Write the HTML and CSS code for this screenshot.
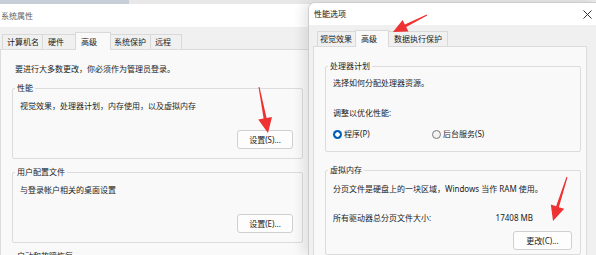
FILE: index.html
```html
<!DOCTYPE html>
<html lang="zh-CN">
<head>
<meta charset="utf-8">
<link rel="stylesheet" href="styles.css">
</head>
<body>
<div class="desk-strip"></div>

<div class="win win-sys">
  <div class="titlebar inactive">系统属性</div>
  <div class="tabstrip">
    <div class="tab t-name">计算机名</div>
    <div class="tab t-hw">硬件</div>
    <div class="tab sel t-adv">高级</div>
    <div class="tab t-prot">系统保护</div>
    <div class="tab t-rem">远程</div>
  </div>
  <div class="panel panel-sys">
    <div class="intro">要进行大多数更改，你必须作为管理员登录。</div>
    <fieldset class="group">
      <legend>性能</legend>
      <div class="desc">视觉效果，处理器计划，内存使用，以及虚拟内存</div>
      <div class="btnrow"><button class="btn">设置(S)...</button></div>
    </fieldset>
    <fieldset class="group g-next">
      <legend>用户配置文件</legend>
      <div class="desc">与登录帐户相关的桌面设置</div>
      <div class="btnrow"><button class="btn">设置(E)...</button></div>
    </fieldset>
    <fieldset class="group g-next g-last">
      <legend>启动和故障恢复</legend>
    </fieldset>
  </div>
</div>

<div class="win win-perf">
  <div class="titlebar perf-title">
    <span>性能选项</span>
    <svg class="close" width="9" height="9" viewBox="0 0 9 9"><path d="M0.5 0.5 L8.5 8.5 M8.5 0.5 L0.5 8.5" stroke="#333" stroke-width="1" fill="none"/></svg>
  </div>
  <div class="tabstrip perf-tabs">
    <div class="tab p-vis">视觉效果</div>
    <div class="tab sel p-adv">高级</div>
    <div class="tab p-dep">数据执行保护</div>
  </div>
  <div class="panel panel-perf">
    <fieldset class="group pgroup">
      <legend>处理器计划</legend>
      <div class="pdesc">选择如何分配处理器资源。</div>
      <div class="plabel">调整以优化性能:</div>
      <div class="radios">
        <label class="radio r-first"><span class="dot on"></span>程序(P)</label>
        <label class="radio"><span class="dot"></span>后台服务(S)</label>
      </div>
    </fieldset>
    <fieldset class="group pgroup vm">
      <legend>虚拟内存</legend>
      <div class="vdesc">分页文件是硬盘上的一块区域，Windows 当作 RAM 使用。</div>
      <div class="vrow"><span class="vlabel">所有驱动器总分页文件大小:</span><span class="vval">17408 MB</span></div>
      <div class="btnrow vbtn"><button class="btn btn-c">更改(C)...</button></div>
    </fieldset>
  </div>
</div>

<svg class="arrows" width="596" height="255" viewBox="0 0 596 255">
  <polygon fill="#ee3232" points="259.5,86.9 266.6,118.0 272.0,116.9 268,133 258.2,119.6 263.6,118.6 258.5,87.1"/>
  <polygon fill="#ee3232" points="427.2,15.4 406.2,27.0 408.4,31.5 393,32 402.6,19.9 404.8,24.4 426.8,14.6"/>
  <polygon fill="#ee3232" points="567.5,177.2 558.9,207.2 564.2,208.8 553,221 550.8,204.6 556.1,206.2 566.5,176.8"/>
</svg>
</body>
</html>
```

FILE: styles.css
```css
* { box-sizing: border-box; }
html, body { margin: 0; padding: 0; }
body {
  width: 596px;
  height: 255px;
  overflow: hidden;
  position: relative;
  background: #e8e8e8;
  font-family: "Noto Sans", "Noto Sans CJK SC", sans-serif;
  font-size: 8px;
  line-height: 12px;
  color: #1b1b1b;
}
.desk-strip {
  position: absolute;
  left: 0; top: 0;
  width: 129px; height: 4px;
  background: #c6ced8;
}
.win {
  position: absolute;
  background: #f0f0f0;
  display: flex;
  flex-direction: column;
}
.win-sys {
  left: 0; top: 4px;
  width: 312px; height: 251px;
  overflow: hidden;
}
.titlebar {
  background: #fff;
  display: flex;
  align-items: center;
  flex: none;
}
.win-sys .titlebar {
  height: 23px;
  padding-left: 1px;
  color: #5f5f5f;
}
.tabstrip {
  display: flex;
  align-items: flex-end;
  flex: none;
}
.win-sys .tabstrip {
  height: 22px;
  padding-left: 2px;
}
.tab {
  height: 15px;
  border: 1px solid #d9d9d9;
  border-bottom: none;
  margin-right: -1px;
  padding-left: 4px;
  background: #f0f0f0;
  display: flex;
  align-items: center;
  color: #1b1b1b;
}
.tab.sel {
  height: 18px;
  background: #f9f9f9;
  margin-bottom: -1px;
  position: relative;
  z-index: 1;
}
.t-name { width: 41px; }
.t-hw { width: 34px; padding-left: 5px; }
.t-adv { width: 36px; padding-left: 5px; }
.t-prot { width: 41px; padding-left: 3px; }
.t-rem { width: 32px; padding-left: 4px; }

.panel {
  background: #f9f9f9;
  border: 1px solid #dcdcdc;
  flex: 1;
}
.panel-sys {
  padding: 13px 8px 0 11px;
}
.intro {
  padding-left: 3px;
  height: 12px;
  margin-bottom: 7px;
}
.group {
  margin: 0;
  padding: 0 9px 9px 7px;
  border: 1px solid #dcdcdc;
  border-radius: 2px;
  min-width: 0;
}
.group legend {
  padding: 0 2px;
  margin-left: -5px;
  line-height: 12px;
}
.g-next { margin-top: 7px; }
.g-last { height: 40px; }
.desc {
  margin-top: 6px;
  height: 12px;
}
.btnrow {
  display: flex;
  justify-content: flex-end;
  margin-top: 18px;
}
.btn {
  width: 56px;
  height: 19px;
  padding: 0;
  margin: 0;
  background: #fdfdfd;
  border: 1px solid #d0d0d0;
  border-radius: 3px;
  font-family: inherit;
  font-size: 8px;
  line-height: 12px;
  color: #1b1b1b;
}

.win-perf {
  left: 308px; top: 2px;
  width: 288px; height: 253px;
  border: 1px solid #cdcdcd;
  border-right: none;
  border-bottom: none;
  border-radius: 7px 0 0 0;
  overflow: hidden;
  box-shadow: -5px 0 12px rgba(0, 0, 0, 0.10);
}
.perf-title {
  height: 22px;
  padding-left: 5px;
  padding-right: 4px;
  justify-content: space-between;
  color: #111;
}
.close { display: block; }
.perf-tabs {
  height: 21px;
  padding-left: 8px;
}
.p-vis { width: 39px; padding-left: 2px; }
.p-adv { width: 34px; padding-left: 5px; }
.p-dep { width: 60px; padding-left: 5px; }
.perf-tabs .tab { height: 15px; }
.perf-tabs .tab.sel { height: 17px; }

.panel-perf {
  margin: 0 9px 0 4px;
  padding: 13px 5px 0 11px;
  border-bottom: none;
}
.pgroup { padding: 0 8px 11px 7px; }
.pdesc { margin-top: 5px; height: 12px; }
.plabel { margin-top: 18px; height: 12px; }
.radios {
  margin-top: 9px;
  display: flex;
  height: 12px;
}
.radio {
  display: flex;
  align-items: center;
}
.r-first { width: 99px; }
.dot {
  width: 9px; height: 9px;
  border-radius: 50%;
  border: 1px solid #7a7a7a;
  background: #f3f3f3;
  margin-right: 2px;
  flex: none;
}
.dot.on {
  border: none;
  background: radial-gradient(circle, #ffffff 0 2px, #005fb8 2.5px);
}
.vm { margin-top: 12px; padding-bottom: 4px; }
.vdesc { margin-top: 7px; height: 12px; white-space: nowrap; }
.vrow {
  margin-top: 17px;
  display: flex;
  height: 12px;
}
.vlabel { flex: 1; }
.vval { margin-right: 39px; }
.vbtn { margin-top: 7px; }
.btn-c { width: 59px; }

.arrows {
  position: absolute;
  left: 0; top: 0;
  pointer-events: none;
}
```
